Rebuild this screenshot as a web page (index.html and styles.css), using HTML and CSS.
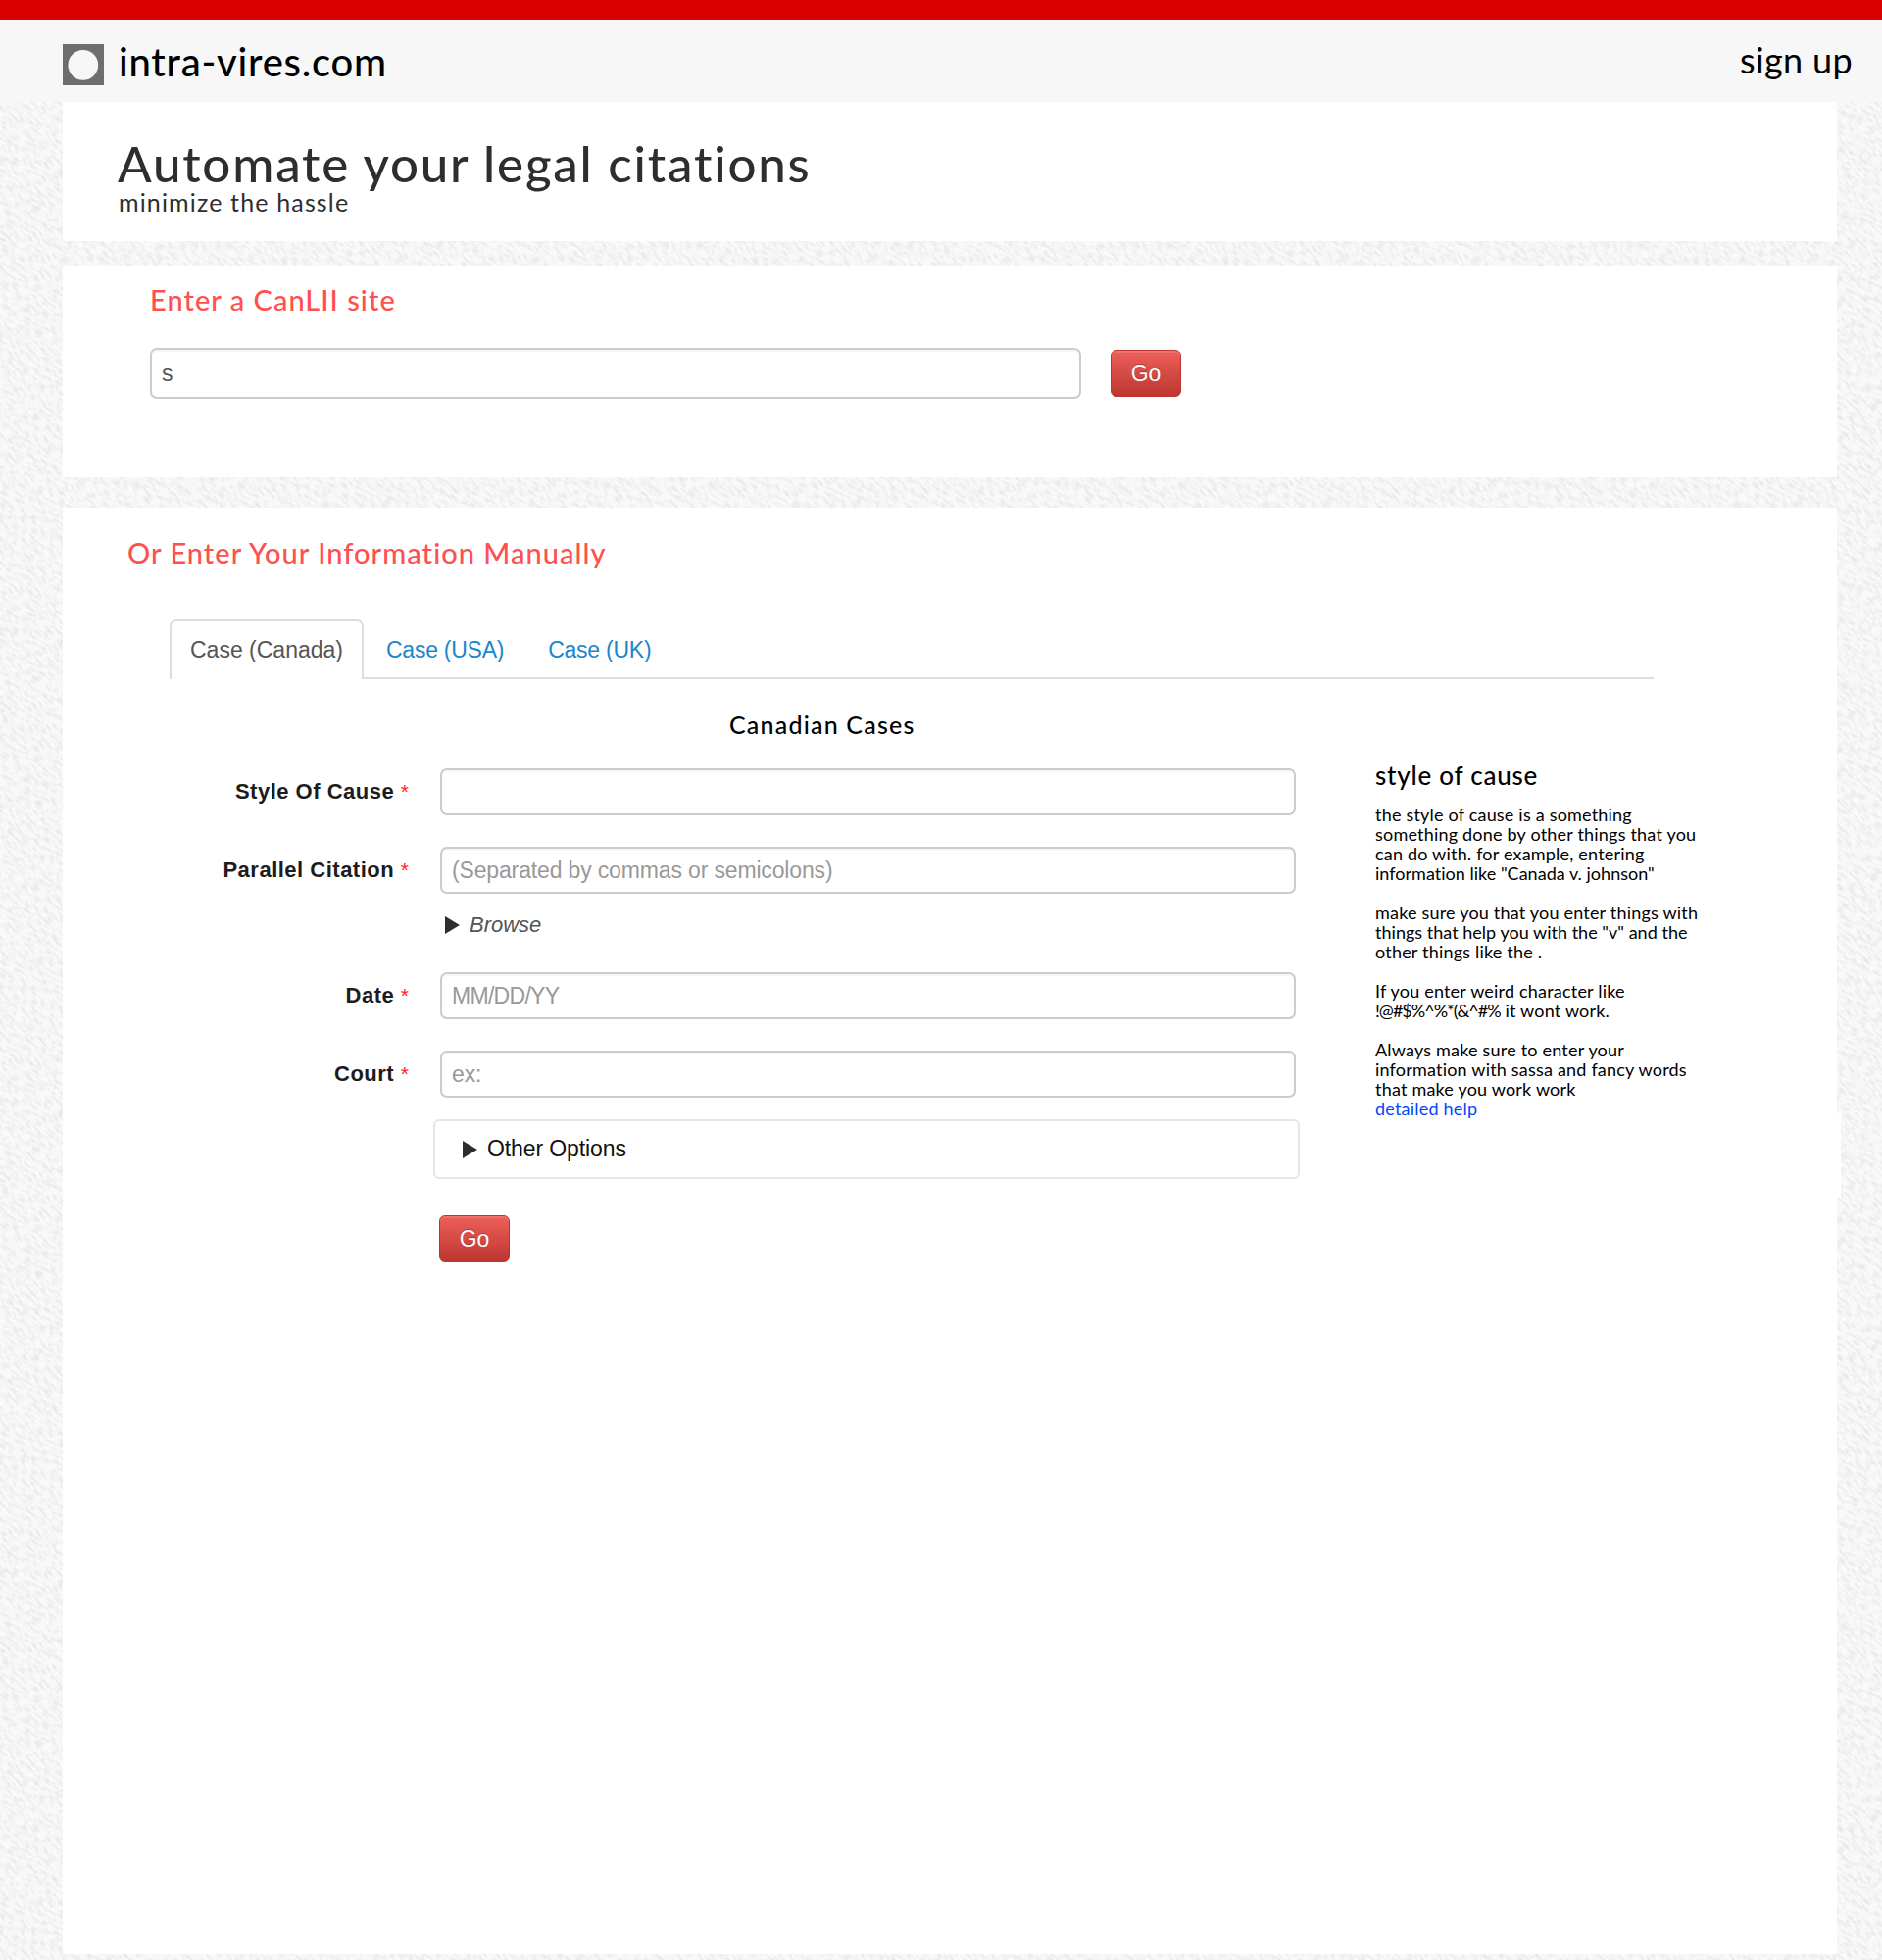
FILE: index.html
```html
<!DOCTYPE html>
<html lang="en">
<head>
<meta charset="utf-8">
<title>intra-vires.com</title>
<link rel="stylesheet" href="styles.css">
</head>
<body>
<header class="topbar">
  <a class="brand">
    <svg class="logo" viewBox="0 0 42 42"><rect width="42" height="42" fill="#6e6e6e"/><circle cx="20.8" cy="21.3" r="15.4" fill="#f7f7f7"/></svg>
    <span class="brand-name">intra-vires.com</span>
  </a>
  <a class="signup">sign up</a>
</header>
<main class="page">
  <section class="panel hero">
    <h1 class="hero-title">Automate your legal citations</h1>
    <p class="hero-sub">minimize the hassle</p>
  </section>
  <section class="panel lookup">
    <h2 class="heading">Enter a CanLII site</h2>
    <form class="lookup-form">
      <input class="field lookup-field" type="text" value="s">
      <button class="btn" type="button">Go</button>
    </form>
  </section>
  <section class="panel manual">
    <h2 class="heading manual-heading">Or Enter Your Information Manually</h2>
    <nav class="tabs">
      <a class="tab active">Case (Canada)</a>
      <a class="tab">Case (USA)</a>
      <a class="tab">Case (UK)</a>
    </nav>
    <h3 class="case-title">Canadian Cases</h3>
    <div class="columns">
      <form class="case-form">
        <label class="label" for="style">Style Of Cause <span class="req">*</span></label>
        <input class="field" id="style" type="text">
        <label class="label" for="parallel">Parallel Citation <span class="req">*</span></label>
        <input class="field" id="parallel" type="text" placeholder="(Separated by commas or semicolons)">
        <a class="browse"><svg class="arrow" viewBox="0 0 15 18"><path d="M0 0L15 9L0 18Z" fill="#2d2d2d"/></svg>Browse</a>
        <label class="label" for="date">Date <span class="req">*</span></label>
        <input class="field date-field" id="date" type="text" placeholder="MM/DD/YY">
        <label class="label" for="court">Court <span class="req">*</span></label>
        <input class="field" id="court" type="text" placeholder="ex:">
        <div class="options"><svg class="arrow" viewBox="0 0 15 18"><path d="M0 0L15 9L0 18Z" fill="#2d2d2d"/></svg>Other Options</div>
        <button class="btn submit" type="button">Go</button>
      </form>
      <aside class="help">
        <h4 class="help-title">style of cause</h4>
        <p>the style of cause is a something<br>something done by other things that you<br>can do with. for example, entering<br><span class="quoted">information like "Canada v. johnson"</span></p>
        <p>make sure you that you enter things with<br><span class="quoted">things that help you with the "v" and the</span><br>other things like the .</p>
        <p>If you enter weird character like<br><span class="symbols">!@#$%^%*(&amp;^#%</span> it wont work.</p>
        <p>Always make sure to enter your<br>information with sassa and fancy words<br>that make you work work<br><a class="help-link">detailed help</a></p>
      </aside>
    </div>
  </section>
</main>
</body>
</html>
```
FILE: styles.css
```css
* { box-sizing: border-box; }
body {
  margin: 0;
  height: 2000px;
  overflow: hidden;
  font-family: Lato, "Open Sans", sans-serif;
  font-variant-ligatures: none;
  color: #000;
  background-color: #f9f9f9;
  background-image: url("data:image/svg+xml,%3Csvg xmlns='http://www.w3.org/2000/svg' width='480' height='480'%3E%3Cfilter id='n' x='0' y='0' width='100%25' height='100%25' color-interpolation-filters='sRGB'%3E%3CfeTurbulence type='fractalNoise' baseFrequency='0.12 0.34' numOctaves='2'/%3E%3CfeColorMatrix values='0 0 0 0 0.4 0 0 0 0 0.4 0 0 0 0 0.4 0.32 0 0 0 -0.135'/%3E%3C/filter%3E%3Crect x='-360' y='-360' width='720' height='720' transform='translate(240 240) rotate(45)' filter='url(%23n)'/%3E%3C/svg%3E");
}
h1, h2, h3, h4, p { margin: 0; font-weight: 400; }

.topbar {
  display: flex;
  justify-content: space-between;
  align-items: flex-start;
  height: 104px;
  padding: 25px 30px 0 64px;
  border-top: 20px solid #db0000;
  background: linear-gradient(#fdfdfd 0 1px, #f7f7f7 1px);
}
.brand { display: flex; gap: 15px; }
.logo { width: 42px; height: 42px; }
.brand-name { margin-top: 1px; font-size: 40px; line-height: 34px; font-weight: 500; letter-spacing: .75px; }
.signup { margin-top: 1px; font-size: 36px; line-height: 30px; letter-spacing: .35px; }

.page { display: flex; flex-direction: column; }
.panel { width: 1810px; margin-left: 64px; background: #fff; }
.hero { height: 142px; padding: 39px 0 0 56px; color: #2e2e2e; }
.hero-title { font-size: 51px; line-height: 48px; font-weight: 500; letter-spacing: 1.8px; }
.hero-sub { padding-left: 1px; font-size: 25px; line-height: 30px; letter-spacing: 1.15px; }
.heading { font-size: 29px; line-height: 40px; font-weight: 500; letter-spacing: 1.03px; color: #ff5050; }

.lookup { height: 216px; margin-top: 25px; padding: 15px 0 0 89px; }
.lookup-form { display: flex; align-items: center; gap: 30px; margin-top: 29px; }
.field {
  width: 873px;
  height: 48px;
  padding: 0 10px;
  border: 2px solid #ccc;
  border-radius: 7px;
  background: #fff;
  box-shadow: inset 0 2px 2px rgba(0, 0, 0, .04);
  font: 23px "Liberation Sans", Arial, sans-serif;
  color: #555;
}
.field::placeholder { color: #999; opacity: 1; letter-spacing: -.15px; }
.date-field::placeholder { letter-spacing: -.7px; }
.lookup-field { width: 950px; height: 52px; }
.btn {
  width: 72px;
  height: 48px;
  padding: 0;
  border: 1px solid #b93632;
  border-radius: 6px;
  background: linear-gradient(#ee5f5b, #bd362f);
  box-shadow: inset 0 2px 0 rgba(255, 255, 255, .12);
  font: 23px "Liberation Sans", Arial, sans-serif;
  color: #fff;
  text-shadow: 0 -1px 0 rgba(0, 0, 0, .25);
}

.manual { position: relative; height: 1476px; margin-top: 31px; padding-top: 26px; }
.manual::after {
  content: "";
  position: absolute;
  left: 100%;
  top: 618px;
  width: 4px;
  height: 86px;
  background: #fff;
}
.manual-heading { margin-left: 66px; }
.tabs {
  display: flex;
  width: 1514px;
  height: 61px;
  margin: 48px 0 0 109px;
  border-bottom: 2px solid #ddd;
  font: 23px/58px "Liberation Sans", Arial, sans-serif;
}
.tab { height: 61px; padding: 2px 22px 0 23px; letter-spacing: -.25px; color: #1a86cc; }
.tab.active {
  width: 198px;
  padding: 0 0 0 19px;
  border: 2px solid #ddd;
  border-bottom: 0;
  border-radius: 7px 7px 0 0;
  background: #fff;
  letter-spacing: 0;
  color: #555;
}
.case-title { margin: 31px 0 0 680px; font-size: 25px; line-height: 30px; font-weight: 500; letter-spacing: 1.2px; }
.columns { display: flex; align-items: flex-start; margin-top: 21px; }
.case-form {
  display: grid;
  grid-template-columns: 353px 873px;
  column-gap: 32px;
  margin-top: 9px;
}
.case-form .field { margin-bottom: 32px; }
.label {
  height: 48px;
  text-align: right;
  font: bold 22px/48px "Liberation Sans", Arial, sans-serif;
  color: #1c1c1c;
  letter-spacing: .5px;
}
.req { font-weight: 400; font-size: 21px; line-height: 1; color: #f22; letter-spacing: 0; }
.browse, .options, .submit { grid-column: 2; }
.arrow { width: 15px; height: 18px; }
.browse {
  display: flex;
  align-items: center;
  gap: 10px;
  height: 34px;
  margin: -17px 0 31px 5px;
  font: italic 22px "Liberation Sans", Arial, sans-serif;
  color: #555;
}
.options {
  display: flex;
  align-items: center;
  gap: 10px;
  width: 884px;
  height: 61px;
  margin: -10px 0 0 -7px;
  padding-left: 28px;
  border: 2px solid #e6e6e6;
  border-radius: 6px;
  font: 23px "Liberation Sans", Arial, sans-serif;
  letter-spacing: -.1px;
  color: #111;
}
.submit { margin: 37px 0 0 -1px; }

.help { margin-left: 81px; font-size: 18px; line-height: 20px; letter-spacing: .2px; white-space: nowrap; }
.help-title { margin-bottom: 14px; font-size: 26px; line-height: 32px; font-weight: 500; letter-spacing: .75px; }
.help p { margin-bottom: 20px; }
.quoted { letter-spacing: .02px; }
.symbols { letter-spacing: -1px; }
.help-link { color: #0048ff; }
```
